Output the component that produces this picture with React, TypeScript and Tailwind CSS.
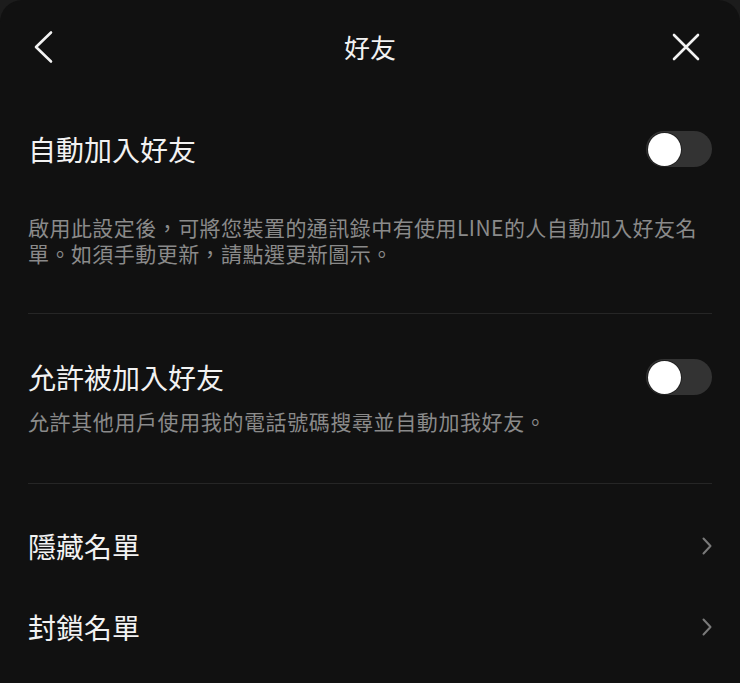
import React, { useState } from 'react';

const font = { fontFamily: '"Noto Sans CJK TC", "Noto Sans", sans-serif' };

function Toggle({ on, onChange }: { on: boolean; onChange: () => void }) {
  return (
    <button
      type="button"
      onClick={onChange}
      className={`flex h-[36px] w-[66px] items-center rounded-full px-[2px] ${on ? 'justify-end bg-[#06c755]' : 'justify-start bg-[#333333]'}`}
    >
      <span className="block h-[33px] w-[33px] rounded-full bg-white shadow-[0_0_0_1px_rgba(0,0,0,0.35)]" />
    </button>
  );
}

function ChevronRight() {
  return (
    <svg width="10" height="18" viewBox="0 0 10 18" fill="none">
      <path d="M1.5 1.5 L8.5 9 L1.5 16.5" stroke="#7a7a7a" strokeWidth="2" strokeLinecap="round" strokeLinejoin="round" />
    </svg>
  );
}

export default function App() {
  const [autoAdd, setAutoAdd] = useState(false);
  const [allowAdd, setAllowAdd] = useState(false);

  return (
    <div className="h-[683px] w-full bg-[#1c1c1c]" style={font}>
      <div className="flex h-full flex-col overflow-hidden rounded-t-[22px] bg-[#111111] text-[#f2f2f2]">
        {/* header */}
        <div className="grid h-[94px] shrink-0 grid-cols-[1fr_auto_1fr] items-center">
          <div className="pl-[32px]">
            <svg width="24" height="34" viewBox="0 0 24 34" fill="none">
              <path d="M19 2.5 L4 17 L19 31.5" stroke="#f2f2f2" strokeWidth="2.6" strokeLinecap="round" strokeLinejoin="round" />
            </svg>
          </div>
          <h1 className="text-[26px] leading-none font-normal">好友</h1>
          <div className="flex justify-end pr-[39px]">
            <svg width="30" height="30" viewBox="0 0 30 30" fill="none">
              <path d="M3 3 L27 27 M27 3 L3 27" stroke="#f2f2f2" strokeWidth="2.6" strokeLinecap="round" />
            </svg>
          </div>
        </div>

        <div className="flex flex-col px-[28px]">
          <div className="mt-[35px] flex h-[40px] items-center justify-between">
            <span className="text-[28px] leading-[38px]">自動加入好友</span>
            <Toggle on={autoAdd} onChange={() => setAutoAdd(v => !v)} />
          </div>
          <p className="mt-[45px] text-[21px] leading-[26px] tracking-[0.45px] text-[#8a8a8a]">
            啟用此設定後，可將您裝置的通訊錄中有使用LINE的人自動加入好友名單。如須手動更新，請點選更新圖示。
          </p>

          <div className="mt-[47px] h-px bg-[#262626]" />

          <div className="mt-[43px] flex h-[40px] items-center justify-between">
            <span className="text-[28px] leading-[38px]">允許被加入好友</span>
            <Toggle on={allowAdd} onChange={() => setAllowAdd(v => !v)} />
          </div>
          <p className="mt-[11px] text-[21px] leading-[26px] tracking-[0.6px] text-[#8a8a8a]">
            允許其他用戶使用我的電話號碼搜尋並自動加我好友。
          </p>

          <div className="mt-[49px] h-px bg-[#262626]" />

          <div className="mt-[42px] flex h-[40px] items-center justify-between">
            <span className="text-[28px] leading-[38px]">隱藏名單</span>
            <ChevronRight />
          </div>
          <div className="mt-[41px] flex h-[40px] items-center justify-between">
            <span className="text-[28px] leading-[38px]">封鎖名單</span>
            <ChevronRight />
          </div>
        </div>
      </div>
    </div>
  );
}
